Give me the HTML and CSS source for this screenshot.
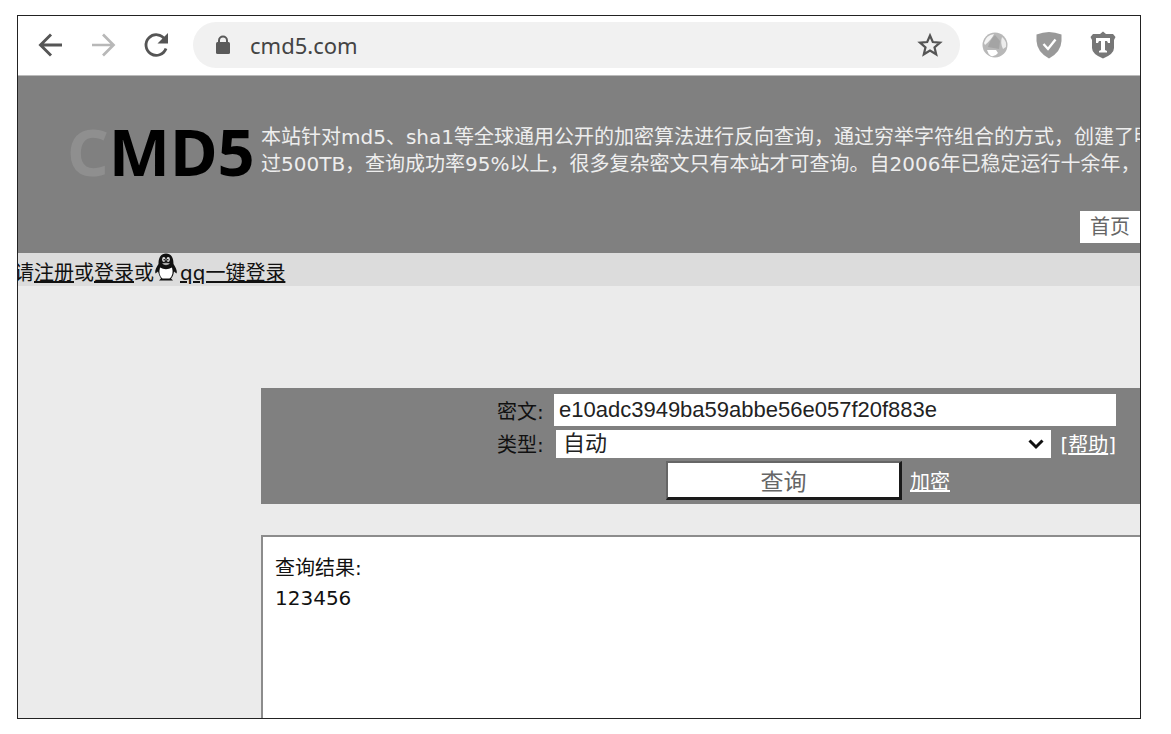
FILE: index.html
```html
<!DOCTYPE html>
<html lang="zh-CN">
<head>
    <meta charset="UTF-8">
    <meta name="viewport" content="width=device-width, initial-scale=1.0">
    <title>cmd5.com</title>
    <link rel="stylesheet" href="styles.css">
</head>
<body>
  <div class="window">
    <div class="toolbar">
      <button class="tool" aria-label="Back"><svg width="26" height="26" viewBox="0 0 26 26"><path d="M25 13H4M14 2.500L3.500 13L14 23.500" fill="none" stroke="#555" stroke-width="2.900"/></svg></button>
      <button class="tool" aria-label="Forward"><svg width="26" height="26" viewBox="0 0 26 26"><path d="M2 13H23M13 2.500L23.500 13L13 23.500" fill="none" stroke="#b8b8b8" stroke-width="2.700"/></svg></button>
      <button class="tool" aria-label="Reload"><svg width="26" height="26" viewBox="0 0 26 26"><path d="M22 7.500A10.300 10.300 0 1 0 23 16.500" fill="none" stroke="#555" stroke-width="2.800"/><path d="M25 1V11.500H14.500Z" fill="#555"/></svg></button>
      <div class="address">
        <svg width="14" height="20" viewBox="0 0 14 20"><path d="M3 8V5.500a4 4 0 0 1 8 0V8" fill="none" stroke="#5a5a5a" stroke-width="2"/><rect x="0" y="7" width="14" height="12" rx="1.500" fill="#5a5a5a"/></svg>
        <input type="text" class="url" value="cmd5.com" aria-label="Address">
        <button class="star" aria-label="Bookmark"><svg width="26" height="26" viewBox="0 0 26 26"><path d="M13 3.500L15.800 10L23 10.600L17.500 15.300L19.200 22.300L13 18.500L6.800 22.300L8.500 15.300L3 10.600L10.200 10Z" fill="none" stroke="#555" stroke-width="2.200"/></svg></button>
      </div>
      <div class="extensions">
        <button class="ext" aria-label="Globe"><svg width="26" height="26" viewBox="0 0 26 26"><circle cx="13" cy="13" r="12.500" fill="#b8b8b8"/><path d="M2 11Q4 3 12 2Q10 7 3 13Z" fill="#f4f4f4"/><path d="M20 5Q25 9 24 15L21 17Q18 11 20 5Z" fill="#ededed"/><path d="M5 18L14 18L16 21Q13 25 9 24Q6 22 5 18Z" fill="#fff"/><path d="M13 3L18 9L17 17L6 15Q8 8 13 3Z" fill="#a4a4a4"/></svg></button>
        <button class="ext" aria-label="Guard"><svg width="26" height="28" viewBox="0 0 26 28"><path d="M13 1Q19 1 25.500 3.500V10Q25 21 13 27.500Q1 21 0.500 10V3.500Q7 1 13 1Z" fill="#999"/><path d="M7.500 13L12 18L19.500 8.500" fill="none" stroke="#fff" stroke-width="2.400"/></svg></button>
        <button class="ext" aria-label="Shield"><svg width="26" height="28" viewBox="0 0 26 28"><path d="M13 0.500L16 3L23 3L25.500 6L24 9V17Q24 23 13 27.500Q2 23 2 17V9L0.500 6L3 3L10 3Z" fill="#777"/><path d="M6 7H20V12H18L17 10H15V19L17 20V21.500H9V20L11 19V10H9L8 12H6Z" fill="#fff"/></svg></button>
      </div>
    </div>

    <div class="header">
      <div class="intro">
        <div class="logo"><span>C</span>MD5</div>
        <p>本站针对md5、sha1等全球通用公开的加密算法进行反向查询&#65292;通过穷举字符组合的方式&#65292;创建了明<br>过500TB&#65292;查询成功率95%以上&#65292;很多复杂密文只有本站才可查询。自2006年已稳定运行十余年&#65292;国</p>
      </div>
      <div class="nav"><a href="#">首页</a></div>
    </div>

    <div class="userbar">
      <div class="login">请<a href="#">注册</a>或<a href="#">登录</a>或<svg width="24" height="28" viewBox="0 0 24 28"><path d="M12 0.500C6.500 0.500 4.500 5 4.500 11C2 15 0.500 18 1.500 20.500L4 18.500C5 22 6 24 7 25.500L5 27.500H19L17 25.500C18.500 24 19.500 22 20 18.500L22.500 20.500C23.500 18 22 15 19.500 11C19.500 5 17.500 0.500 12 0.500Z" fill="#111"/><path d="M6 14.500Q12 18 18 14.500Q20 22 15.500 25.500H8.500Q4 22 6 14.500Z" fill="#fff"/><ellipse cx="9.800" cy="6.500" rx="1.700" ry="2.400" fill="#ddd"/><ellipse cx="14.200" cy="6.500" rx="1.700" ry="2.400" fill="#ddd"/><circle cx="10.200" cy="6.800" r="0.800"/><circle cx="13.800" cy="6.800" r="0.800"/><path d="M8 10.500Q12 9 16 10.500Q12 14 8 10.500Z" fill="#aaa"/></svg> <a href="#">qq一键登录</a></div>
    </div>

    <div class="main">
      <form class="query">
        <div class="row">
          <label for="hash">密文:</label>
          <input type="text" id="hash" value="e10adc3949ba59abbe56e057f20f883e">
        </div>
        <div class="row">
          <label for="type">类型:</label>
          <div class="select">
            <select id="type">
              <option>自动</option>
            </select>
            <svg width="16" height="12" viewBox="0 0 16 12"><path d="M1.500 2.500L8 9L14.500 2.500" fill="none" stroke="#111" stroke-width="3"/></svg>
          </div>
          <span class="help">[<a href="#">帮助</a>]</span>
        </div>
        <div class="actions">
          <button type="button" class="submit">查询</button>
          <a href="#">加密</a>
        </div>
      </form>
      <div class="result">
        <p>查询结果:</p>
        <p>123456</p>
      </div>
    </div>
  </div>
</body>
</html>
```
FILE: styles.css
```css
* {
    box-sizing: border-box;
}
body {
    margin: 0;
    height: 100vh;
    padding: 15px 30px 15px 17px;
    background: #fff;
    font-family: "DejaVu Sans", "Noto Sans CJK SC", sans-serif;
    font-size: 20px;
    color: #111;
}
button, input, select {
    font: inherit;
    border: none;
    border-radius: 0;
}
button {
    padding: 0;
    background: none;
    cursor: pointer;
}
p {
    margin: 0;
}
svg {
    display: block;
}
.window {
    display: flex;
    flex-direction: column;
    height: 100%;
    border: 1px solid #222;
    background: #ebebeb;
    overflow: hidden;
}

/* browser toolbar */
.toolbar {
    display: flex;
    align-items: center;
    flex: none;
    height: 60px;
    padding: 0 24px 2px 19px;
    background: #fff;
    border-bottom: 1px solid #bbb;
}
.tool {
    margin-right: 27px;
}
.address {
    display: flex;
    align-items: center;
    flex: 1;
    min-width: 0;
    height: 46px;
    margin-left: -3px;
    padding: 0 17px 0 23px;
    border-radius: 23px;
    background: #f1f1f1;
}
.url {
    flex: 1;
    min-width: 0;
    padding: 0 0 0 20px;
    background: none;
    font-family: "Noto Sans", sans-serif;
    font-size: 22px;
    color: #444;
}
.extensions {
    display: flex;
    align-items: center;
    gap: 28px;
    margin-left: 22px;
}

/* site header */
.header {
    flex: none;
    height: 177px;
    background: #808080;
}
.intro {
    display: flex;
    height: 135px;
    padding: 48px 0 0 49px;
    white-space: nowrap;
}
.intro p {
    color: #eee;
    line-height: 27px;
}
.logo {
    flex: none;
    width: 194px;
    font-family: "Noto Sans", sans-serif;
    font-size: 65px;
    font-weight: bold;
    line-height: 54px;
    color: #000;
}
.logo span {
    color: #8f8f8f;
}
.nav {
    display: flex;
    justify-content: flex-end;
}
.nav a {
    padding: 0 10px;
    background: #fff;
    color: #666;
    line-height: 32px;
    text-decoration: none;
}
.userbar {
    flex: none;
    height: 33px;
    background: #dcdcdc;
}
.login {
    display: flex;
    margin-left: -4px;
    line-height: 40px;
    white-space: nowrap;
}
.login svg {
    margin-right: 2px;
}
.login a {
    color: #111;
}

/* query form and result */
.main {
    display: flex;
    flex-direction: column;
    flex: 1;
    padding: 102px 0 0 243px;
}
.query {
    padding: 6px 24px 4px 236px;
    background: #808080;
}
.row {
    display: flex;
    align-items: center;
    margin-bottom: 3px;
}
.row label {
    width: 57px;
}
.row input {
    flex: 1;
    min-width: 0;
    height: 32px;
    padding: 0 5px;
    font-family: "Liberation Sans", Arial, sans-serif;
    font-size: 22px;
    color: #222;
}
.select {
    position: relative;
    flex: 1;
    min-width: 0;
    margin-left: 2px;
}
.select select {
    display: block;
    width: 100%;
    height: 28px;
    padding: 0 7px;
    appearance: none;
    background: #fff;
    font-size: 22px;
    line-height: 28px;
    color: #222;
}
.select svg {
    position: absolute;
    top: 8px;
    right: 7px;
    pointer-events: none;
}
.help {
    margin-left: 9px;
    color: #fff;
}
.query a {
    color: #fff;
}
.actions {
    display: flex;
    align-items: center;
    gap: 8px;
    padding-left: 169px;
}
.submit {
    width: 236px;
    height: 39px;
    border: 2px solid #666;
    border-right: 3px solid #1a1a1a;
    border-bottom: 3px solid #1a1a1a;
    background: #fff;
    font-size: 23px;
    color: #666;
}
.result {
    flex: 1;
    margin-top: 31px;
    padding: 16px 12px;
    border: 2px solid #8c8c8c;
    border-right: none;
    border-bottom: none;
    background: #fff;
    line-height: 30px;
}
```
